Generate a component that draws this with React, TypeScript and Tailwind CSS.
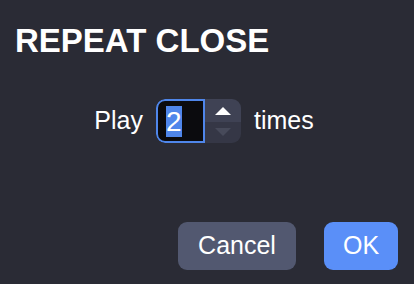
import React, { useState } from 'react'

export default function App() {
  const [count] = useState(2)

  return (
    <div
      className="w-[414px] h-[284px] bg-[#2a2b35] text-white flex flex-col overflow-hidden"
      style={{ fontFamily: '"Liberation Sans", Arial, sans-serif' }}
    >
      <h1 className="px-[15px] pt-[22px] text-[33px] leading-[38px] font-bold">REPEAT CLOSE</h1>

      <div className="mt-[39px] flex items-center justify-center gap-[13px] text-[25px] pr-[6px]">
        <span>Play</span>
        <div className="flex h-[44px] rounded-[9px] overflow-hidden">
          <div className="w-[49px] bg-[#0b0b0e] border-2 border-[#4f86ea] rounded-l-[9px] flex items-center pl-[8px]">
            <span className="bg-[#4f86ea] text-white text-[28px] leading-[31px]">{count}</span>
          </div>
          <div className="w-[36px] flex flex-col">
            <button type="button" className="flex-1 bg-[#3f4254] flex items-center justify-center pt-[1px]">
              <svg width="16" height="8" viewBox="0 0 16 8"><path d="M8 0 L16 8 L0 8 Z" fill="#ffffff" /></svg>
            </button>
            <button type="button" className="flex-1 bg-[#353746] flex items-center justify-center">
              <svg width="16" height="8" viewBox="0 0 16 8"><path d="M0 0 L16 0 L8 8 Z" fill="#474a5a" /></svg>
            </button>
          </div>
        </div>
        <span>times</span>
      </div>

      <div className="mt-auto mb-[14px] mr-[16px] flex justify-end gap-[28px] text-[25px]">
        <button type="button" className="w-[118px] h-[48px] rounded-[9px] bg-[#525870] text-white">
          Cancel
        </button>
        <button type="button" className="w-[74px] h-[48px] rounded-[9px] bg-[#5a8ff8] text-white">
          OK
        </button>
      </div>
    </div>
  )
}
